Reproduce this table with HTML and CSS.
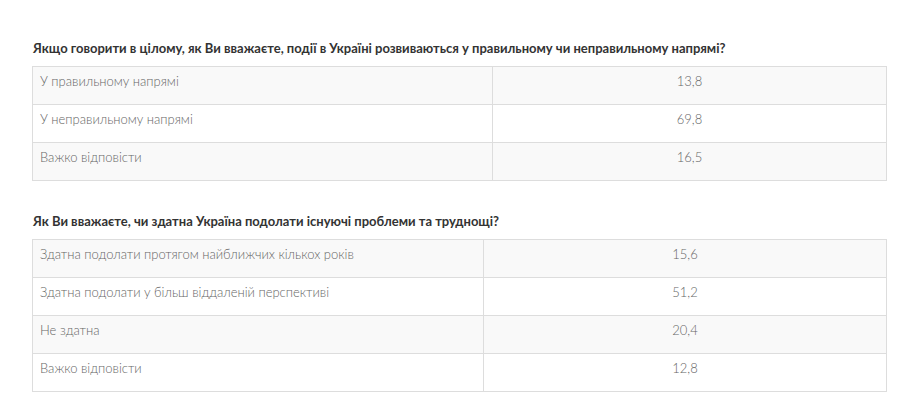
FILE: index.html
```html
<!DOCTYPE html>
<html lang="uk">
<head>
<meta charset="utf-8">
<link rel="stylesheet" href="styles.css">
</head>
<body>
<div class="page">
  <section class="block">
    <h3 class="q">Якщо говорити в цілому, як Ви вважаєте, події в Україні розвиваються у правильному чи неправильному напрямі?</h3>
    <table class="tbl t1">
      <tr class="odd"><td class="lab">У правильному напрямі</td><td class="val">13,8</td></tr>
      <tr><td class="lab">У неправильному напрямі</td><td class="val">69,8</td></tr>
      <tr class="odd"><td class="lab">Важко відповісти</td><td class="val">16,5</td></tr>
    </table>
  </section>
  <section class="block b2">
    <h3 class="q">Як Ви вважаєте, чи здатна Україна подолати існуючі проблеми та труднощі?</h3>
    <table class="tbl t2">
      <tr class="odd"><td class="lab">Здатна подолати протягом найближчих кількох років</td><td class="val">15,6</td></tr>
      <tr><td class="lab">Здатна подолати у більш віддаленій перспективі</td><td class="val">51,2</td></tr>
      <tr class="odd"><td class="lab">Не здатна</td><td class="val">20,4</td></tr>
      <tr><td class="lab">Важко відповісти</td><td class="val">12,8</td></tr>
    </table>
  </section>
</div>
</body>
</html>
```
FILE: styles.css
```css
html, body { margin: 0; padding: 0; background: #fff; }
body { font-family: Lato, "Open Sans", sans-serif; }
.page { padding: 40px 23px 0 32px; }
.q {
  margin: 0 0 9px 1px;
  font-size: 13px;
  line-height: 17px;
  font-weight: 700;
  color: #333;
}
.b2 { margin-top: 32px; }
.tbl {
  width: 855px;
  border-collapse: collapse;
  table-layout: fixed;
  font-size: 13px;
  font-weight: 300;
  color: #666;
}
.tbl td {
  border: 1px solid #ddd;
  padding: 6px 7px 14px;
  line-height: 17px;
  vertical-align: top;
}
.tbl tr.odd td { background: #f9f9f9; }
.t1 .lab { width: 445px; }
.t2 .lab { width: 436px; }
.val { text-align: center; }
```
